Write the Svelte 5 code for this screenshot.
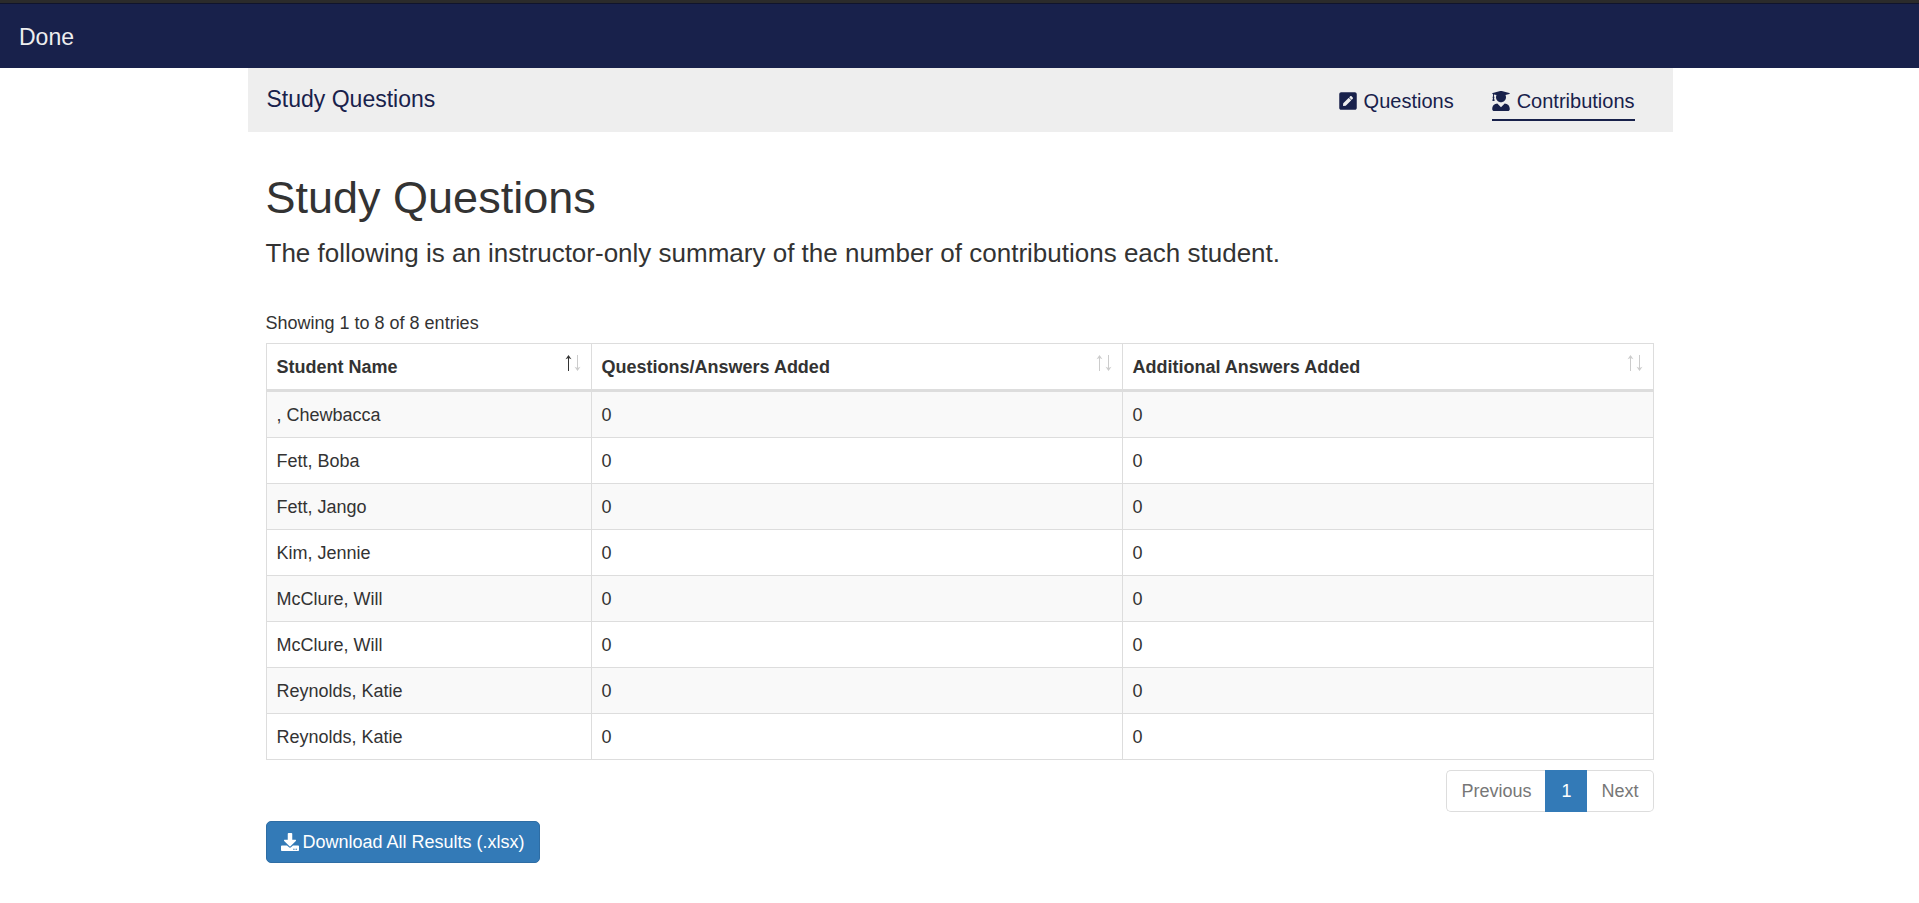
<script>
  const columns = ['Student Name', 'Questions/Answers Added', 'Additional Answers Added'];
  const students = [
    ', Chewbacca',
    'Fett, Boba',
    'Fett, Jango',
    'Kim, Jennie',
    'McClure, Will',
    'McClure, Will',
    'Reynolds, Katie',
    'Reynolds, Katie'
  ].map((name) => ({ name, questions: 0, answers: 0 }));
</script>

<div class="topbar">
  <a href="#done">Done</a>
</div>

<div class="page">
  <header>
    <a class="brand" href="#home">Study Questions</a>
    <nav>
      <a href="#questions">
        <svg width="18" height="20" viewBox="0 0 448 512" fill="currentColor" aria-hidden="true">
          <path d="M400 480H48c-26.500 0-48-21.500-48-48V80c0-26.500 21.500-48 48-48h352c26.500 0 48 21.500 48 48v352c0 26.500-21.500 48-48 48zM238.100 177.900L102.400 313.600l-6.300 57.100c-.8 7.600 5.600 14.100 13.300 13.300l57.100-6.300L302.200 242c2.300-2.300 2.300-6.100 0-8.500L246.700 178c-2.500-2.400-6.300-2.400-8.600-.1zM345 165.100L314.900 135c-9.400-9.400-24.600-9.400-33.900 0l-23.100 23.100c-2.300 2.300-2.300 6.100 0 8.500l55.500 55.500c2.300 2.300 6.100 2.300 8.500 0L345 199c9.300-9.300 9.300-24.500 0-33.900z" />
        </svg>
        Questions
      </a>
      <a class="active" href="#contributions">
        <svg width="18" height="20" viewBox="0 0 448 512" fill="currentColor" aria-hidden="true">
          <path d="M319.400 320.600L224 416l-95.400-95.400C57.100 323.700 0 382.200 0 454.400v9.600c0 26.500 21.500 48 48 48h352c26.500 0 48-21.500 48-48v-9.600c0-72.200-57.100-130.700-128.600-133.800zM13.600 79.800l6.400 1.500v58.400c-7 4.200-12 11.500-12 20.300 0 8.400 4.600 15.400 11.100 19.700L3.500 242c-1.700 6.900 2.100 14 7.600 14h41.800c5.500 0 9.300-7.100 7.600-14l-15.600-62.300C51.400 175.400 56 168.400 56 160c0-8.800-5-16.100-12-20.300V87.100l66 15.900c-8.600 17.200-14 36.400-14 57 0 70.700 57.300 128 128 128s128-57.300 128-128c0-20.600-5.300-39.800-14-57l96.300-23.200c18.200-4.400 18.200-27.100 0-31.500l-190.400-46c-13-3.100-26.700-3.100-39.700 0L13.600 48.200c-18.100 4.400-18.100 27.200 0 31.600z" />
        </svg>
        Contributions
      </a>
    </nav>
  </header>

  <main>
    <h1>Study Questions</h1>
    <p class="lead">The following is an instructor-only summary of the number of contributions each student.</p>
    <p class="info">Showing 1 to 8 of 8 entries</p>

    <table>
      <thead>
        <tr>
          {#each columns as column, i}
            <th scope="col" aria-sort={i === 0 ? 'ascending' : undefined}>
              <div class="heading">
                {column}
                <svg width="16" height="16" viewBox="0 0 16 16" fill="none" aria-hidden="true">
                  <g class:on={i === 0}>
                    <path d="M3.500 1v15" /><path class="tip" d="M3.500 0L6.500 4.200 3.500 3 .5 4.200z" />
                  </g>
                  <g>
                    <path d="M12.500 0v15" /><path class="tip" d="M12.500 16l3-4.200-3 1.200-3-1.200z" />
                  </g>
                </svg>
              </div>
            </th>
          {/each}
        </tr>
      </thead>
      <tbody>
        {#each students as student}
          <tr>
            <td>{student.name}</td>
            <td>{student.questions}</td>
            <td>{student.answers}</td>
          </tr>
        {/each}
      </tbody>
    </table>

    <div class="pagination">
      <button disabled>Previous</button>
      <button class="current" aria-current="page">1</button>
      <button disabled>Next</button>
    </div>

    <a class="download" href="#download">
      <svg width="18" height="18" viewBox="0 0 512 512" fill="currentColor" aria-hidden="true">
        <path d="M216 0h80c13.300 0 24 10.700 24 24v168h87.700c17.800 0 26.700 21.500 14.100 34.100L269.700 378.300c-7.500 7.500-19.800 7.500-27.300 0L90.100 226.100c-12.600-12.600-3.700-34.100 14.100-34.100H192V24c0-13.300 10.700-24 24-24zm296 376v112c0 13.300-10.700 24-24 24H24c-13.300 0-24-10.700-24-24V376c0-13.300 10.700-24 24-24h146.700l49 49c20.100 20.100 52.500 20.100 72.600 0l49-49H488c13.300 0 24 10.700 24 24zm-124 88c0-11-9-20-20-20s-20 9-20 20 9 20 20 20 20-9 20-20zm64 0c0-11-9-20-20-20s-20 9-20 20 9 20 20 20 20-9 20-20z" />
      </svg>
      Download All Results (.xlsx)
    </a>
  </main>
</div>

<style>
  :global(body) {
    background: #fff;
    color: #333;
    font-family: "Liberation Sans", Arial, sans-serif;
    font-size: 18px;
    line-height: 25px;
  }

  a {
    color: #18214b;
    text-decoration: none;
  }

  .topbar {
    display: flex;
    align-items: center;
    height: 62px;
    padding: 3px 0 0 19px;
    background: #18214b;
    border-top: 3px solid #2b2b2b;
    box-shadow: inset 0 1px #10142c;
  }

  .topbar a {
    color: #eee;
    font-size: 23px;
  }

  .page {
    max-width: 1425px;
    margin: 0 auto;
    padding-left: 1px;
  }

  header {
    display: flex;
    justify-content: space-between;
    height: 64px;
    padding: 0 38px 0 19px;
    background: #eee;
  }

  .brand {
    padding-top: 19px;
    font-size: 23px;
  }

  nav {
    display: flex;
    align-items: flex-start;
    gap: 38px;
    padding-top: 17px;
    font-size: 20px;
  }

  nav a {
    display: flex;
    align-items: center;
    gap: 7px;
    height: 32px;
    padding-bottom: 4px;
  }

  nav a.active {
    padding-bottom: 2px;
    border-bottom: 2px solid #18214b;
  }

  main {
    padding: 38px 19px 20px 18px;
  }

  h1 {
    margin: 0;
    font-size: 45px;
    font-weight: 400;
    line-height: 56px;
  }

  .lead {
    margin: 8px 0 39px;
    font-size: 26px;
    line-height: 38px;
  }

  .info {
    margin: 0 0 7px;
  }

  table {
    width: 100%;
    table-layout: fixed;
    border-collapse: separate;
    border-spacing: 0;
    border-top: 1px solid #ddd;
    border-left: 1px solid #ddd;
  }

  th,
  td {
    height: 44px;
    padding: 1px 10px 0;
    border-right: 1px solid #ddd;
    border-bottom: 1px solid #ddd;
    text-align: left;
  }

  th {
    border-bottom-width: 3px;
  }

  th:first-child {
    width: 304px;
  }

  .heading {
    display: flex;
    justify-content: space-between;
    align-items: center;
  }

  .heading svg {
    margin-bottom: 8px;
    stroke: #ccc;
  }

  .heading .tip {
    fill: #ccc;
    stroke: none;
  }

  .heading .on {
    stroke: #333;
  }

  .heading .on .tip {
    fill: #333;
  }

  tbody tr:nth-child(odd) {
    background: #f9f9f9;
  }

  .pagination {
    display: flex;
    justify-content: flex-end;
    margin: 10px 0 9px;
  }

  button {
    height: 42px;
    padding: 0 14px;
    background: #fff;
    border: 1px solid #ddd;
    color: #777;
    font: inherit;
  }

  button:first-child {
    border-right: 0;
    border-radius: 5px 0 0 5px;
  }

  button:last-child {
    border-left: 0;
    border-radius: 0 5px 5px 0;
  }

  .current {
    padding: 0 15px;
    background: #337ab7;
    border-color: #337ab7;
    color: #fff;
  }

  .download {
    display: inline-flex;
    align-items: center;
    gap: 4px;
    height: 40px;
    padding: 0 14px;
    background: #337ab7;
    border: 1px solid #2e6da4;
    border-radius: 5px;
    color: #fff;
  }
</style>
